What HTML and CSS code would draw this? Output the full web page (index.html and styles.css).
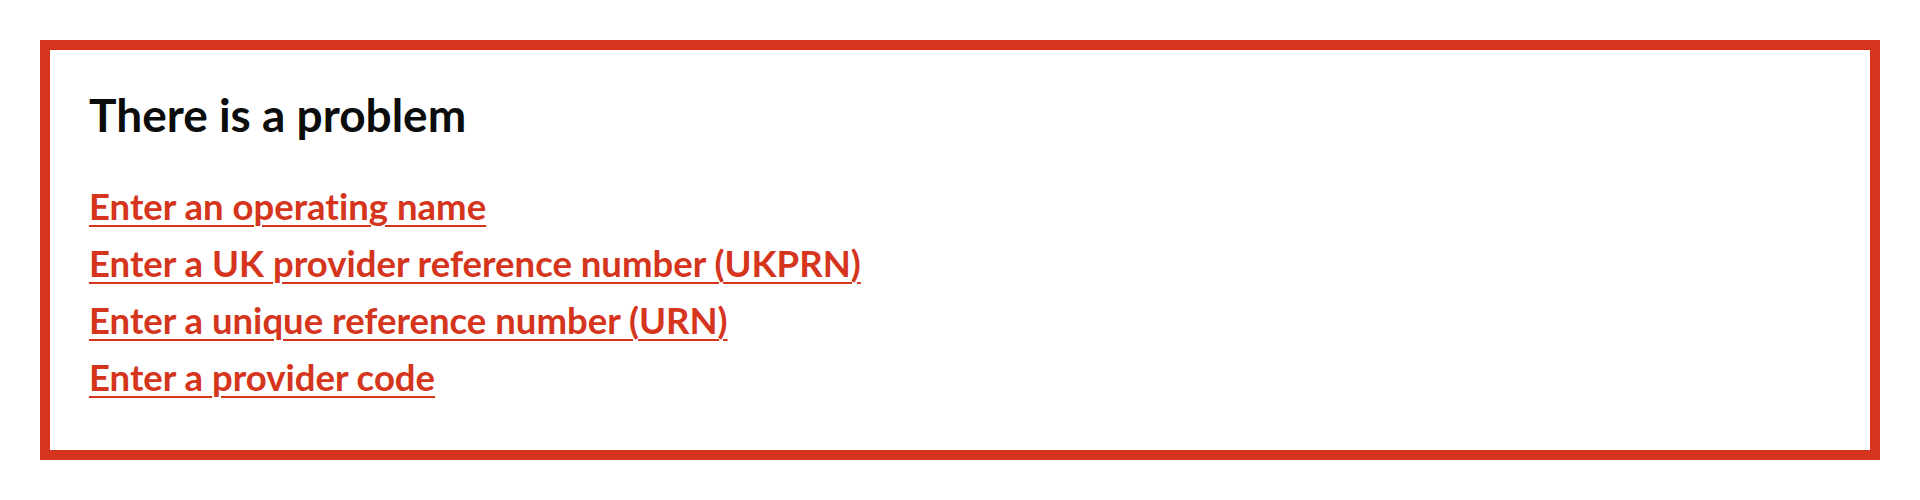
FILE: index.html
```html
<!DOCTYPE html>
<html lang="en">
<head>
<meta charset="utf-8">
<title>There is a problem</title>
<link rel="stylesheet" href="styles.css">
</head>
<body>
<div class="error-summary" role="alert">
  <h2 class="error-summary__title">There is a problem</h2>
  <ul class="error-summary__list">
    <li><a href="#operating-name">Enter an operating name</a></li>
    <li><a href="#ukprn">Enter a UK provider reference number (UKPRN)</a></li>
    <li><a href="#urn">Enter a unique reference number (URN)</a></li>
    <li><a href="#provider-code">Enter a provider code</a></li>
  </ul>
</div>
</body>
</html>
```
FILE: styles.css
```css
html, body {
  margin: 0;
  background: #ffffff;
}
body {
  padding: 40px;
  font-family: Lato, "Noto Sans", sans-serif;
  font-variant-ligatures: none;
  color: #0b0c0c;
}
.error-summary {
  border: 10px solid #d4351c;
  padding: 36px 39px 50px 39px;
  box-sizing: border-box;
  height: 420px;
}
.error-summary__title {
  margin: 0 0 40px 0;
  font-size: 46px;
  line-height: 57px;
  font-weight: 700;
  color: #0b0c0c;
}
.error-summary__list {
  list-style: none;
  margin: 0;
  padding: 0;
}
.error-summary__list li {
  margin: 0 0 10px 0;
  font-size: 36.5px;
  line-height: 47px;
  font-weight: 700;
}
.error-summary__list li:last-child {
  margin-bottom: 0;
}
.error-summary__list a {
  color: #d4351c;
  text-decoration: underline;
  text-decoration-thickness: 2px;
  text-underline-offset: 5px;
}
```
